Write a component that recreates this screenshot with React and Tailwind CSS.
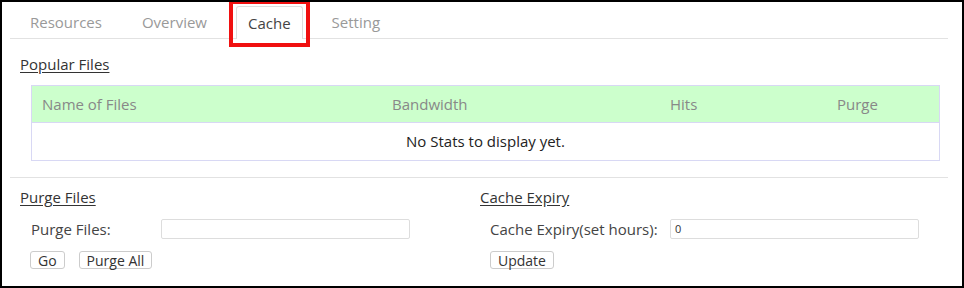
export default function App() {
  return (
    <div className="w-[964px] h-[288px] border-2 border-black bg-white overflow-hidden font-['Open_Sans',sans-serif] text-[#333]">
      <div className="ml-[8px] w-[938px]">
        {/* Tabs */}
        <div className="flex items-end h-[37px] border-b border-[#e2e2e2]">
          <div className="mx-[9px] px-[11px] h-[32px] flex items-center text-[15px] text-[#999]">Resources</div>
          <div className="mx-[9px] px-[11px] h-[32px] flex items-center text-[15px] text-[#999]">Overview</div>
          <div className="relative mx-[9px] px-[11px] h-[33px] -mb-px flex items-center text-[15px] text-[#444] border border-b-0 border-[#ddd] rounded-t-[3px] bg-white">
            Cache
            <div className="absolute left-[-8px] right-[-8px] top-[-7px] bottom-[-8px] border-[4px] border-[#f01010]" />
          </div>
          <div className="mx-[9px] px-[11px] h-[32px] flex items-center text-[15px] text-[#999]">Setting</div>
        </div>

        {/* Popular files */}
        <div className="mt-[15px] ml-[10px] text-[15px] leading-[20px] underline underline-offset-2 text-[#333]">Popular Files</div>
        <div className="mt-[11px] ml-[21px] w-[909px] border border-[#d8d8f4]">
          <div className="flex h-[37px] items-center bg-[#ccffcc] border-b border-[#d8d8f4] text-[15px] text-[#888]">
            <div className="w-[350px] pl-[10px]">Name of Files</div>
            <div className="w-[278px] pl-[10px]">Bandwidth</div>
            <div className="w-[167px] pl-[10px]">Hits</div>
            <div className="flex-1 pl-[10px]">Purge</div>
          </div>
          <div className="h-[37px] flex items-center justify-center text-[15px] text-[#222]">No Stats to display yet.</div>
        </div>
        <div className="mt-[16px] h-px bg-[#e2e2e2]" />

        {/* Bottom sections */}
        <div className="flex mt-[9px]">
          <div className="w-[470px] pl-[10px]">
            <div className="text-[15px] leading-[20px] underline underline-offset-2 text-[#333]">Purge Files</div>
            <div className="mt-[12px] flex items-center h-[20px]">
              <div className="w-[141px] pl-[11px] text-[15px] text-[#444]">Purge Files:</div>
              <div className="w-[249px] h-[20px] border border-[#ddd] rounded-[2px]" />
            </div>
            <div className="mt-[12px] flex gap-[14px] ml-[10px]">
              <div className="h-[18px] px-[7px] flex items-center border border-[#ccc] rounded-[3px] text-[14px] text-[#333]">Go</div>
              <div className="h-[18px] px-[7px] flex items-center border border-[#ccc] rounded-[3px] text-[14px] text-[#333]">Purge All</div>
            </div>
          </div>
          <div className="flex-1">
            <div className="text-[15px] leading-[20px] underline underline-offset-2 text-[#333]">Cache Expiry</div>
            <div className="mt-[12px] flex items-center h-[20px]">
              <div className="w-[190px] pl-[10px] text-[15px] text-[#444]">Cache Expiry(set hours):</div>
              <div className="w-[249px] h-[20px] border border-[#ddd] rounded-[2px] flex items-center pl-[4px] text-[11px] text-[#333]">0</div>
            </div>
            <div className="mt-[12px] flex ml-[10px]">
              <div className="h-[18px] px-[7px] flex items-center border border-[#ccc] rounded-[3px] text-[14px] text-[#333]">Update</div>
            </div>
          </div>
        </div>
      </div>
    </div>
  );
}
